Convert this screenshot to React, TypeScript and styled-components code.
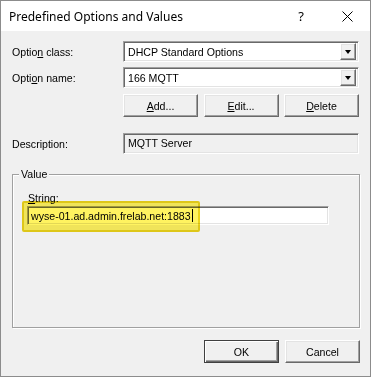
import React from 'react';
import styled, { createGlobalStyle } from 'styled-components';

const GlobalStyle = createGlobalStyle`
  html, body {
    margin: 0;
    padding: 0;
    background: #f0f0f0;
  }
  body {
    font-family: "Liberation Sans", Arial, sans-serif;
    font-size: 10.6px;
    color: #000;
  }
`;

const sunken = `
  border-style: solid;
  border-width: 1px;
  border-color: #a0a0a0 #ffffff #ffffff #a0a0a0;
  box-shadow: inset 1px 1px 0 #696969, inset -1px -1px 0 #e3e3e3;
`;

const raised = `
  border-style: solid;
  border-width: 1px;
  border-color: #ffffff #696969 #696969 #ffffff;
  box-shadow: inset -1px -1px 0 #a0a0a0, inset 1px 1px 0 #e3e3e3;
`;

const App: React.FC = () => {
  return (
    <>
      <GlobalStyle />
      <Window>
        <TitleBar>
          <Title>Predefined Options and Values</Title>
          <TitleButton>?</TitleButton>
          <TitleButton>
            <svg width="11" height="11" viewBox="0 0 11 11">
              <path d="M0.5 0.5 L10.5 10.5 M10.5 0.5 L0.5 10.5" stroke="#000" strokeWidth="1" />
            </svg>
          </TitleButton>
        </TitleBar>

        <Body>
          <FieldRow>
            <Label>Optio<u>n</u> class:</Label>
            <Combo>
              <ComboText>DHCP Standard Options</ComboText>
              <DropButton>
                <Arrow />
              </DropButton>
            </Combo>
          </FieldRow>

          <FieldRow $top={5}>
            <Label>Opti<u>o</u>n name:</Label>
            <Combo>
              <ComboText>166 MQTT</ComboText>
              <DropButton>
                <Arrow />
              </DropButton>
            </Combo>
          </FieldRow>

          <ButtonsRow>
            <span />
            <ButtonGroup>
              <Button><u>A</u>dd...</Button>
              <Button><u>E</u>dit...</Button>
              <Button><u>D</u>elete</Button>
            </ButtonGroup>
          </ButtonsRow>

          <FieldRow $top={16}>
            <Label>Description:</Label>
            <ReadOnlyBox>MQTT Server</ReadOnlyBox>
          </FieldRow>

          <Group>
            <Legend>Value</Legend>
            <GroupLabel><u>S</u>tring:</GroupLabel>
            <TextBox>
              wyse-01.ad.admin.frelab.net:1883
              <Caret />
            </TextBox>
            <Highlight />
          </Group>

          <Footer>
            <Button $default>OK</Button>
            <Button>Cancel</Button>
          </Footer>
        </Body>
      </Window>
    </>
  );
};

const Window = styled.div`
  width: 371px;
  height: 377px;
  box-sizing: border-box;
  border: 1px solid #8c8c8c;
  background: #f0f0f0;
  display: flex;
  flex-direction: column;
`;

const TitleBar = styled.div`
  height: 30px;
  background: #ffffff;
  display: flex;
  align-items: center;
  padding-left: 8px;
`;

const Title = styled.div`
  flex: 1;
  font-family: "Noto Sans", "Open Sans", sans-serif;
  font-size: 12px;
  color: #000;
`;

const TitleButton = styled.div`
  width: 46px;
  height: 30px;
  display: flex;
  align-items: center;
  justify-content: center;
  font-family: "Noto Sans", sans-serif;
  font-size: 13px;
`;

const Body = styled.div`
  flex: 1;
  padding: 10px 10px 0 11px;
  display: flex;
  flex-direction: column;
`;

const FieldRow = styled.div<{ $top?: number }>`
  display: grid;
  grid-template-columns: 111px 236px;
  align-items: center;
  height: 21px;
  margin-top: ${(p) => p.$top ?? 0}px;
`;

const Label = styled.div`
  white-space: nowrap;
`;

const Combo = styled.div`
  ${sunken}
  box-sizing: border-box;
  height: 21px;
  background: #ffffff;
  display: flex;
  align-items: center;
  padding: 2px 2px 2px 4px;
`;

const ComboText = styled.div`
  flex: 1;
`;

const DropButton = styled.div`
  ${raised}
  box-sizing: border-box;
  width: 16px;
  height: 17px;
  background: #f0f0f0;
  display: flex;
  align-items: center;
  justify-content: center;
`;

const Arrow = styled.div`
  width: 0;
  height: 0;
  border-left: 3.5px solid transparent;
  border-right: 3.5px solid transparent;
  border-top: 4px solid #000;
`;

const ButtonsRow = styled.div`
  display: grid;
  grid-template-columns: 111px 236px;
  margin-top: 6px;
`;

const ButtonGroup = styled.div`
  display: flex;
  justify-content: space-between;
`;

const Button = styled.div<{ $default?: boolean }>`
  ${raised}
  box-sizing: border-box;
  width: 75px;
  height: 23px;
  background: #f0f0f0;
  display: flex;
  align-items: center;
  justify-content: center;
  ${(p) =>
    p.$default &&
    `
    border-color: #404040;
    box-shadow: inset 1px 1px 0 #ffffff, inset -1px -1px 0 #696969, inset -2px -2px 0 #a0a0a0;
  `}
`;

const ReadOnlyBox = styled.div`
  ${sunken}
  box-sizing: border-box;
  height: 21px;
  background: #f0f0f0;
  padding: 3px 0 0 4px;
`;

const Group = styled.div`
  position: relative;
  margin-top: 20px;
  height: 154px;
  box-sizing: border-box;
  border: 1px solid #a0a0a0;
  box-shadow: 1px 1px 0 #ffffff, inset 1px 1px 0 #ffffff;
  padding: 16px 0 0 14px;
`;

const Legend = styled.span`
  position: absolute;
  top: -8px;
  left: 6px;
  padding: 0 2px;
  background: #f0f0f0;
  line-height: 14px;
`;

const GroupLabel = styled.div`
  line-height: 14px;
  margin-left: 1px;
`;

const TextBox = styled.div`
  ${sunken}
  box-sizing: border-box;
  width: 302px;
  height: 19px;
  margin-top: 1px;
  background: #ffffff;
  display: flex;
  align-items: center;
  padding-left: 3px;
  white-space: nowrap;
`;

const Caret = styled.span`
  display: inline-block;
  width: 1px;
  height: 13px;
  margin-left: 1px;
  background: #000;
`;

const Highlight = styled.div`
  position: absolute;
  left: 9px;
  top: 26px;
  width: 178px;
  height: 31px;
  box-sizing: border-box;
  border: 2px solid #ecd41a;
  border-radius: 2px;
  background: #fff360;
  mix-blend-mode: multiply;
  pointer-events: none;
`;

const Footer = styled.div`
  display: flex;
  justify-content: flex-end;
  gap: 6px;
  margin-top: 12px;
`;

export default App;
